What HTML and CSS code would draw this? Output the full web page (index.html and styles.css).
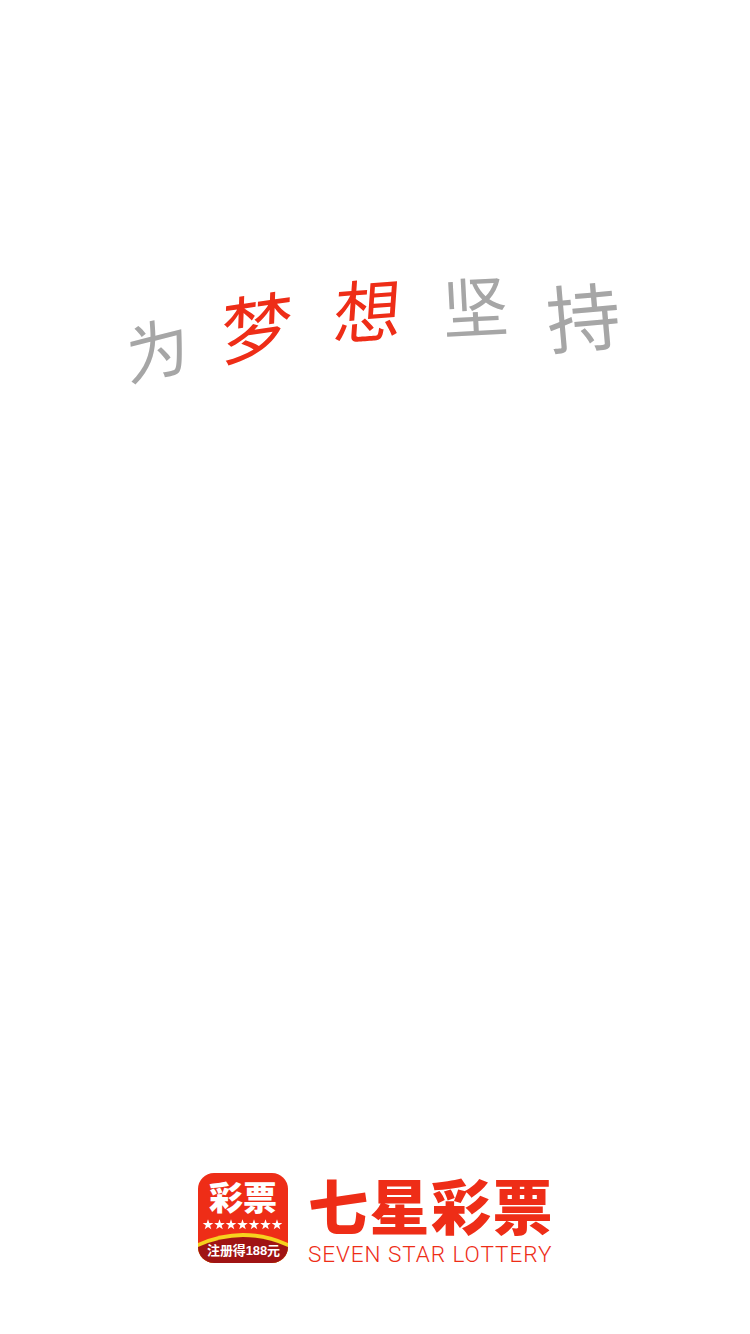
FILE: index.html
```html
<!DOCTYPE html>
<html lang="zh-CN">
<head>
<meta charset="utf-8">
<title>七星彩票</title>
<link rel="stylesheet" href="styles.css">
</head>
<body>
<main class="splash">
  <div class="slogan">
    <span class="char gray c1">为</span>
    <span class="char red c2">梦</span>
    <span class="char red c3">想</span>
    <span class="char gray c4">坚</span>
    <span class="char gray c5">持</span>
  </div>
  <div class="brand">
    <svg class="app-icon" width="90" height="90" viewBox="0 0 90 90" role="img" aria-label="彩票">
      <defs><clipPath id="round"><rect width="90" height="90" rx="16"/></clipPath></defs>
      <g clip-path="url(#round)">
        <rect class="icon-red" width="90" height="90"/>
        <path class="icon-yellow" d="M0 70 Q45 50 90 70 V90 H0 Z"/>
        <path class="icon-dark" d="M0 74 Q45 54 90 74 V90 H0 Z"/>
      </g>
      <text class="icon-title" x="45" y="37" textLength="68" lengthAdjust="spacingAndGlyphs">彩票</text>
      <g class="icon-stars">
        <polygon id="s" points="10,46.2 11.3,50 15.3,50 12.1,52.4 13.3,56.2 10,53.9 6.7,56.2 7.9,52.4 4.7,50 8.7,50"/>
        <use href="#s" x="11.5"/><use href="#s" x="23"/><use href="#s" x="34.5"/>
        <use href="#s" x="46"/><use href="#s" x="57.5"/><use href="#s" x="69"/>
      </g>
      <text class="icon-note" x="45.5" y="82" textLength="73">注册得188元</text>
    </svg>
    <div class="wordmark">
      <div class="name">七星彩票</div>
      <div class="name-en">SEVEN STAR LOTTERY</div>
    </div>
  </div>
</main>
</body>
</html>
```
FILE: styles.css
```css
* { box-sizing: border-box; }
html, body { margin: 0; padding: 0; background: #fff; }
body { font-family: "Noto Sans CJK SC", "Liberation Sans", sans-serif; }

.splash {
  width: 750px;
  height: 1334px;
  overflow: hidden;
  display: flex;
  flex-direction: column;
  align-items: center;
  padding-top: 266px;
  padding-bottom: 69px;
}

.slogan {
  display: flex;
  align-items: flex-start;
  width: 750px;
  padding-left: 125px;
}
.char {
  display: block;
  line-height: 1;
  font-weight: 400;
}
.gray { color: #a6a6a6; }
.red { color: #ee2d17; }
.c1 { font-size: 64px; margin-top: 48px; transform: rotate(-14deg) skewX(-10deg); }
.c2 { font-size: 72px; margin-top: 22px; margin-left: 32px; transform: rotate(-8deg) skewX(-10deg); }
.c3 { font-size: 68px; margin-top: 8px; margin-left: 41px; transform: rotate(-4deg) skewX(-8deg); }
.c4 { font-size: 66px; margin-top: 4px; margin-left: 40px; transform: rotate(-3deg); }
.c5 { font-size: 74px; margin-top: 11px; margin-left: 38px; transform: rotate(-5deg); }

.brand {
  margin-top: auto;
  margin-left: 2px;
  display: flex;
  align-items: flex-start;
  gap: 20px;
}
.app-icon { display: block; flex: none; }
.icon-red { fill: #ee2d17; }
.icon-yellow { fill: #f6d21e; }
.icon-dark { fill: #a01414; }
.icon-stars { fill: #fff; }
.icon-title {
  fill: #fff;
  font-size: 33px;
  font-weight: 900;
  text-anchor: middle;
}
.icon-note {
  fill: #fff;
  font-family: "Liberation Sans", "Noto Sans CJK SC", sans-serif;
  font-size: 13px;
  font-weight: 700;
  text-anchor: middle;
}

.wordmark { width: 246px; color: #ee2d17; }
.name {
  font-size: 60px;
  line-height: 62px;
  font-weight: 900;
  letter-spacing: 1.5px;
  white-space: nowrap;
}
.name-en {
  font-family: Roboto, "Liberation Sans", sans-serif;
  font-size: 22.5px;
  font-weight: 300;
  line-height: 22px;
  margin-top: 8px;
  letter-spacing: 0.95px;
  white-space: nowrap;
}
```
